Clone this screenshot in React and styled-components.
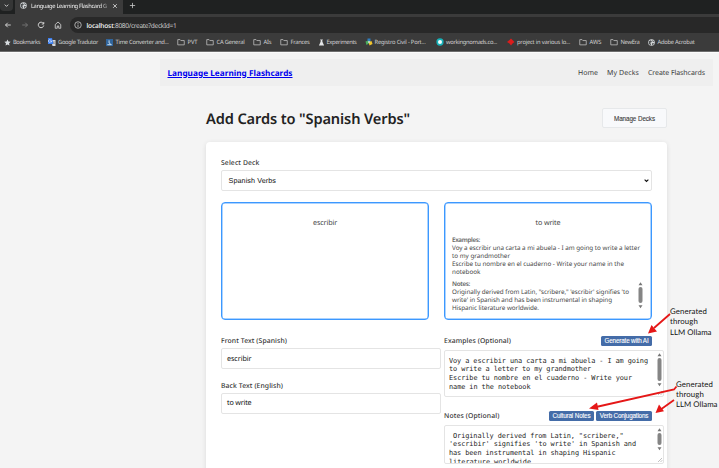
import React, { useLayoutEffect, useRef, useState } from "react";
import styled, { createGlobalStyle } from "styled-components";

const Global = createGlobalStyle`
  * { box-sizing: border-box; }
  html, body { margin: 0; padding: 0; overflow: hidden; }
  body {
    width: 719px; height: 468px; background: #f4f4f4; color: #333;
    font-family: "Noto Sans", "Open Sans", sans-serif; font-size: 7px;
    text-rendering: geometricPrecision;
  }
`;

/* Text tracked so that it spans a given width. */
const Line = styled.span`
  display: inline-block;
  white-space: pre;
`;

function Fitted({ w, children }) {
  const ref = useRef(null);
  const [tracking, setTracking] = useState(0);
  useLayoutEffect(() => {
    const natural = ref.current.getBoundingClientRect().width;
    setTracking((w - natural) / children.length);
  }, []);
  return (
    <Line ref={ref} style={{ letterSpacing: `${tracking}px` }}>
      {children}
    </Line>
  );
}

/* ---------- Browser chrome ---------- */
const Screen = styled.div`
  position: relative;
  width: 719px;
  height: 468px;
  overflow: hidden;
`;
const Browser = styled.header`
  height: 52px;
  background: #3b3b3b;
  border-bottom: 1px solid #6e6e6e;
  color: #d6d6d6;
`;
const TabStrip = styled.div`
  height: 14px;
  background: #1f2121;
  display: flex;
  align-items: stretch;
`;
const TabSearch = styled.div`
  width: 13px;
  height: 11px;
  background: #353636;
  border-radius: 0 0 4px 4px;
  display: flex;
  align-items: center;
  justify-content: center;
`;
const Tab = styled.div`
  margin-left: 2px;
  width: 108px;
  background: #3b3b3b;
  display: flex;
  align-items: center;
  padding: 0 5px 3px;
  line-height: 10px;
  font-size: 5.8px;
  color: #f0f0f0;
`;
const TabTitle = styled.div`
  margin-left: 4px;
  width: 78px;
  overflow: hidden;
  mask-image: linear-gradient(90deg, #000 90%, rgba(0, 0, 0, 0.3) 100%);
`;
const NewTab = styled.div`
  padding: 2px 0 0 6px;
  line-height: 0;
`;
const Toolbar = styled.div`
  height: 21px;
  display: flex;
  align-items: center;
  padding-left: 4px;
  gap: 8.5px;
  padding-top: 1px;
`;
const Omnibox = styled.div`
  flex: 1;
  height: 16px;
  margin-left: -0.500px;
  background: #282828;
  border-radius: 8px 0 0 8px;
  display: flex;
  align-items: center;
  padding-left: 4px;
  gap: 5px;
  font-size: 6.6px;
  color: #c8c8c8;
  b { color: #fff; font-weight: 500; }
`;
const Bookmarks = styled.div`
  height: 14px;
  display: flex;
  align-items: center;
  padding-left: 3.5px;
  font-size: 5.8px;
  line-height: 8px;
  color: #d2d2d2;
`;
const Bookmark = styled.div`
  width: ${(p) => p.$w}px;
  flex: none;
  display: flex;
  align-items: center;
  svg { flex: none; margin-right: ${(p) => p.$gap}px; }
`;

const S = ({ s = 8, children, ...rest }) => (
  <svg width={s} height={s} viewBox="0 0 16 16" fill="none" {...rest}>{children}</svg>
);
const Globe = ({ s = 7 }) => (
  <S s={s}>
    <circle cx="8" cy="8" r="7.5" fill="#d5d8da" />
    <path d="M2 5l4-2 3 2-2 3-3 1 3 2-1 4-4-4zM10 2l4 3-1 2-3-2zM10 9l4 1-3 4-2-2z" fill="#4d5052" />
  </S>
);
const Folder = () => (
  <S s={8}><path d="M1.5 3.2h4.6l1.6 1.9h6.8v8.6h-13z" stroke="#c4c4c4" strokeWidth="1.5" strokeLinejoin="round" /></S>
);
const icons = {
  star: <S s={7}><path d="M8 1l2.2 4.7 5.1.6-3.8 3.5 1 5.1L8 12.4l-4.5 2.5 1-5.1L.7 6.3l5.1-.6z" fill="#d8dde0" /></S>,
  translate: (
    <S s={8}>
      <path d="M6 4h9v12H9z" fill="#d4d7dc" /><path d="M0 0h8l3 12H0z" fill="#3b7ded" />
      <path d="M7 4H4.800a2.500 2.500 0 1 0 0 4H7V6H5" stroke="#fff" strokeWidth="1.200" />
      <path d="M10 8h4M12 7v1c0 2-1 3-2 4m1-3l3 3" stroke="#777" />
    </S>
  ),
  clock: <S s={7}><path d="M0 0h16v16H0z" fill="#31659c" /><path d="M7 3v6l4 3M3 13h10" stroke="#dfeefa" strokeWidth="2" /></S>,
  flask: <S s={7}><path d="M5 1h6v1.500h-1V6l4 9H2l4-9V2.500H5z" fill="#e2e4e6" /></S>,
  registro: (
    <S s={8}>
      <path d="M5 1h6v7H5z" fill="#2f7fc1" /><path d="M1 7l6-2 2 5-6 4z" fill="#4caf60" />
      <path d="M7 8l6-2 2 6-6 3z" fill="#f2c42c" /><circle cx="8" cy="8" r="2" fill="#cbd8d9" />
    </S>
  ),
  nomads: <S s={8}><circle cx="8" cy="8" r="7.300" fill="#16b1b8" /><circle cx="8" cy="8" r="4" fill="#f3ffff" /></S>,
  diamond: <S s={8}><path d="M8 1l3 3 4 4-4 3-3 4-3-4-5-3 5-4z" fill="#dc1c1c" /></S>,
  folder: <Folder />,
  globe: <Globe />,
};
const bookmarks = [
  ["star", "Bookmarks", 27, 44, 2.5],
  ["translate", "Google Tradutor", 40, 58, 2.5],
  ["clock", "Time Converter and...", 53, 71, 3],
  ["folder", "PVT", 10, 29, 3],
  ["folder", "CA General", 28, 47, 3],
  ["folder", "AIs", 8, 27, 3],
  ["folder", "Frances", 19, 38, 3],
  ["flask", "Experiments", 30, 47, 2],
  ["registro", "Registro Civil - Port...", 51, 71, 2],
  ["nomads", "workingnomads.co...", 51, 71, 2.5],
  ["diamond", "project in various lo...", 53, 72, 2.5],
  ["folder", "AWS", 12, 31, 3],
  ["folder", "NewEra", 19, 38, 3],
  ["globe", "Adobe Acrobat", 37, 60, 3],
];

/* ---------- Page ---------- */
const Page = styled.main`
  height: 416px;
  background: #f4f4f4;
  border-top: 1px solid #fcfcfc;
  padding: 6px 6.5px 0 160px;
`;
const Navbar = styled.nav`
  height: 27px;
  background: #efefef;
  display: flex;
  align-items: center;
  justify-content: space-between;
  padding: 2px 7.500px 0 7.500px;
`;
const Brand = styled.a`
  color: #0000ee;
  font-weight: 700;
  font-size: 8.2px;
  line-height: 12px;
  ${Line} {
    text-decoration: underline;
    text-decoration-thickness: 1px;
    text-underline-offset: 1px;
    text-decoration-skip-ink: auto;
  }
`;
const NavLinks = styled.div`
  display: flex;
  gap: 9px;
  font-size: 7px;
  line-height: 10px;
  color: #3c3c3c;
  padding-top: 1px;
`;
const Content = styled.section`
  width: 461px;
  margin-left: 46px;
`;
const HeadingRow = styled.div`
  height: 20px;
  margin-top: 22px;
  display: flex;
  align-items: center;
  justify-content: space-between;
`;
const Heading = styled.h1`
  margin: 0;
  padding-top: 2px;
  font-size: 14.6px;
  line-height: 20px;
  font-weight: 600;
  color: #222;
`;
const ManageButton = styled.button`
  width: 65px;
  height: 20px;
  padding: 0;
  border: 1px solid #e6e8ea;
  border-radius: 2px;
  background: #f8f9fb;
  color: #3c3c3c;
  font: 400 6.3px "Liberation Sans", sans-serif;
  -webkit-text-stroke: 0.1px #3c3c3c;
`;
const Panel = styled.div`
  margin-top: 14px;
  height: 350px;
  background: #fff;
  border-radius: 4px;
  box-shadow: 0 1px 5px rgba(0, 0, 0, 0.1);
  padding: 15px;
`;
const Label = styled.label`
  display: block;
  height: 10px;
  font-size: 6.8px;
  line-height: 11px;
  font-weight: 500;
  color: #333;
`;
const Field = styled.div`
  width: ${(p) => p.$w || 220}px;
  height: 21px;
  margin-top: 3px;
  border: 1px solid #e4e4e4;
  border-radius: 2px;
  background: #fff;
  display: flex;
  align-items: center;
  justify-content: space-between;
  padding: 0 2px 0 ${(p) => p.$pl || 5}px;
  font-family: ${(p) => (p.$sans ? '"Liberation Sans", Arial' : '"Noto Sans"')}, sans-serif;
  font-size: 7.2px;
  line-height: 10px;
  color: #111;
`;
const Previews = styled.div`
  display: grid;
  grid-template-columns: 208px 208px;
  gap: 15px;
  margin-top: 11px;
`;
const Preview = styled.div`
  height: 118px;
  border: 1px solid #3c98ff;
  box-shadow: inset 0 0 0 0.500px #5aa8ff;
  border-radius: 4px;
  padding: 15px 7px 0;
  background: #fff;
  color: #484848;
`;
const Word = styled.div`
  text-align: center;
  font-size: 7.2px;
  line-height: 11.5px;
`;
const Block = styled.div`
  margin-top: ${(p) => p.$mt}px;
  display: flex;
  justify-content: space-between;
  font-size: 6.3px;
`;
const Lines = styled.div`
  display: flex;
  flex-direction: column;
  align-items: flex-start;
  line-height: ${(p) => p.$lh || 8}px;
`;
const Strong = styled.span`
  font-weight: 600;
  color: #666;
`;
const Form = styled.div`
  display: grid;
  grid-template-columns: 223px 220px;
  margin-top: 15px;
`;
const LabelRow = styled.div`
  display: flex;
  height: 10px;
  width: 208px;
  align-items: center;
  gap: 2px;
  ${Label} { flex: 1; }
`;
const ActionButton = styled.button`
  width: ${(p) => p.$w}px;
  height: 10.500px;
  margin-top: 2px;
  padding: 0;
  border: 0;
  border-radius: 1.500px;
  background: #446ca8;
  color: #fff;
  font: 400 6.3px/10px "Liberation Sans", Arial, sans-serif;
  -webkit-text-stroke: 0.1px #fff;
`;
const TextArea = styled.div`
  height: ${(p) => p.$h}px;
  margin-top: 5px;
  border: 1px solid #e4e4e4;
  border-radius: 2px;
  overflow: hidden;
  display: flex;
  justify-content: space-between;
  padding: 0 0 0 4px;
  font-family: "DejaVu Sans Mono", monospace;
  font-size: 6.9px;
  color: #1d1d1d;
  ${Lines} { padding-top: 5.500px; flex: none; }
`;
const Spacer = styled.div`
  height: ${(p) => p.$h}px;
`;

function ScrollBar({ thumb, height, grip }) {
  return (
    <svg width="7" height={height} viewBox={`0 0 7 ${height}`}>
      <path d="M1.500 5.200L3.500 2.200l2 3z" fill="#777" />
      <rect x="1.500" y="7" width="4" height={thumb} rx="2" fill="#858585" />
      <path d={`M1.500 ${thumb + 9.300}h4l-2 3z`} fill="#777" />
      {grip && <path d={`M2 ${height - 1}l4-4M4.500 ${height - 1}l1.800-1.800`} stroke="#999" strokeWidth=".6" />}
    </svg>
  );
}

/* ---------- Annotations over the page ---------- */
const Overlay = styled.svg`
  position: absolute;
  inset: 0;
`;
const Note = styled.div`
  position: absolute;
  left: ${(p) => p.$x}px;
  top: ${(p) => p.$y}px;
  display: flex;
  flex-direction: column;
  align-items: flex-start;
  font-family: Lato, "Open Sans", sans-serif;
  font-size: 7.8px;
  line-height: 10.4px;
  color: #111;
`;
const Annotation = ({ x, y }) => (
  <Note $x={x} $y={y}>
    <Fitted w={37}>Generated</Fitted>
    <Fitted w={28}>through</Fitted>
    <Fitted w={41.5}>LLM Ollama</Fitted>
  </Note>
);

export default function App() {
  return (
    <>
      <Global />
      <Screen>
        <Browser>
          <TabStrip>
            <TabSearch>
              <S s={7}><path d="M4 6l4 4 4-4" stroke="#ddd" strokeWidth="2" /></S>
            </TabSearch>
            <Tab>
              <Globe />
              <TabTitle><Fitted w={76}>Language Learning Flashcard G</Fitted></TabTitle>
              <S s={6} style={{ marginLeft: 4 }}><path d="M3 3l10 10M13 3L3 13" stroke="#eee" strokeWidth="2" /></S>
            </Tab>
            <NewTab><S s={7}><path d="M8 2v12M2 8h12" stroke="#ccc" strokeWidth="1.800" /></S></NewTab>
          </TabStrip>
          <Toolbar>
            <S><path d="M13.500 8H3M7.500 3.500L3 8l4.500 4.500" stroke="#ddd" strokeWidth="1.800" /></S>
            <S><path d="M2.500 8H13M8.500 3.500L13 8l-4.500 4.500" stroke="#777" strokeWidth="1.800" /></S>
            <S><path d="M12.800 5A5.500 5.500 0 1 0 13.500 9M13.500 2v4h-4" stroke="#ddd" strokeWidth="1.900" /></S>
            <S><path d="M2.500 7L8 2l5.500 5v7.500h-4V10h-3v4.500h-4z" stroke="#d5d5d5" strokeWidth="1.700" /></S>
            <Omnibox>
              <S><circle cx="8" cy="8" r="6.500" stroke="#ccc" strokeWidth="1.600" /><path d="M8 7v5M8 4v1.800" stroke="#ccc" strokeWidth="1.600" /></S>
              <div><b><Fitted w={27}>localhost</Fitted></b><Fitted w={63}>:8080/create?deckId=1</Fitted></div>
            </Omnibox>
          </Toolbar>
          <Bookmarks>
            {bookmarks.map(([icon, name, textWidth, width, gap]) => (
              <Bookmark key={name} $w={width} $gap={gap}>
                {icons[icon]}
                <Fitted w={textWidth}>{name}</Fitted>
              </Bookmark>
            ))}
          </Bookmarks>
        </Browser>
        <Page>
          <Navbar>
            <Brand><Fitted w={125}>Language Learning Flashcards</Fitted></Brand>
            <NavLinks>
              <Fitted w={20}>Home</Fitted>
              <Fitted w={32}>My Decks</Fitted>
              <Fitted w={57}>Create Flashcards</Fitted>
            </NavLinks>
          </Navbar>
          <Content>
            <HeadingRow>
              <Heading><Fitted w={204}>Add Cards to "Spanish Verbs"</Fitted></Heading>
              <ManageButton><Fitted w={41}>Manage Decks</Fitted></ManageButton>
            </HeadingRow>
            <Panel>
              <Label><Fitted w={38.5}>Select Deck</Fitted></Label>
              <Field $w={431} $sans $pl={6.5}>
                <Fitted w={47.5}>Spanish Verbs</Fitted>
                <S s={5}><path d="M2 5l6 6 6-6" stroke="#111" strokeWidth="3.500" /></S>
              </Field>
              <Previews>
                <Preview><Word><Fitted w={24}>escribir</Fitted></Word></Preview>
                <Preview>
                  <Word><Fitted w={25}>to write</Fitted></Word>
                  <Block $mt={6}>
                    <Lines>
                      <Strong><Fitted w={28}>Examples:</Fitted></Strong>
                      <Fitted w={188}>Voy a escribir una carta a mi abuela - I am going to write a letter</Fitted>
                      <Fitted w={58}>to my grandmother</Fitted>
                      <Fitted w={172}>Escribe tu nombre en el cuaderno - Write your name in the</Fitted>
                      <Fitted w={28.5}>notebook</Fitted>
                    </Lines>
                  </Block>
                  <Block $mt={4}>
                    <Lines $lh={8.2}>
                      <Strong><Fitted w={18}>Notes:</Fitted></Strong>
                      <Fitted w={177}>Originally derived from Latin, "scribere," 'escribir' signifies 'to</Fitted>
                      <Fitted w={160}>write' in Spanish and has been instrumental in shaping</Fitted>
                      <Fitted w={87}>Hispanic literature worldwide.</Fitted>
                    </Lines>
                    <ScrollBar height={33} thumb={16} />
                  </Block>
                </Preview>
              </Previews>
              <Form>
                <div>
                  <Label><Fitted w={66}>Front Text (Spanish)</Fitted></Label>
                  <Field><Fitted w={24.5}>escribir</Fitted></Field>
                  <Spacer $h={10.5} />
                  <Label><Fitted w={62}>Back Text (English)</Fitted></Label>
                  <Field><Fitted w={24.5}>to write</Fitted></Field>
                </div>
                <div>
                  <LabelRow>
                    <Label><Fitted w={67}>Examples (Optional)</Fitted></Label>
                    <ActionButton $w={51}><Fitted w={44}>Generate with AI</Fitted></ActionButton>
                  </LabelRow>
                  <TextArea $h={47}>
                    <Lines $lh={8.8}>
                      <Fitted w={199}>Voy a escribir una carta a mi abuela - I am going</Fitted>
                      <Fitted w={142}>to write a letter to my grandmother</Fitted>
                      <Fitted w={183}>Escribe tu nombre en el cuaderno - Write your</Fitted>
                      <Fitted w={81.5}>name in the notebook</Fitted>
                    </Lines>
                    <ScrollBar height={45} thumb={23} grip />
                  </TextArea>
                  <Spacer $h={13} />
                  <LabelRow>
                    <Label><Fitted w={55.5}>Notes (Optional)</Fitted></Label>
                    <ActionButton $w={45}><Fitted w={38}>Cultural Notes</Fitted></ActionButton>
                    <ActionButton $w={56}><Fitted w={48.5}>Verb Conjugations</Fitted></ActionButton>
                  </LabelRow>
                  <TextArea $h={38.5}>
                    <Lines $lh={8.8}>
                      <Fitted w={174.500}>{' Originally derived from Latin, "scribere,"'}</Fitted>
                      <Fitted w={187}>'escribir' signifies 'to write' in Spanish and</Fitted>
                      <Fitted w={166.500}>has been instrumental in shaping Hispanic</Fitted>
                      <Fitted w={82}>literature worldwide</Fitted>
                    </Lines>
                    <ScrollBar height={37} thumb={12} grip />
                  </TextArea>
                </div>
              </Form>
            </Panel>
          </Content>
        </Page>
        <Overlay width="719" height="468" viewBox="0 0 719 468">
          <path
            d="M670 314L654 328M676.500 386.500l-2.500 3L596 407M674 400L660 410"
            fill="none" stroke="#e51717" strokeWidth="1.800"
          />
          <path
            d="M648 333.500l3.500-8.500 5.500 6.500zM589 408.500l8-6 1.500 7.500zM655.500 413l3.500-8.500 5 6.800z"
            fill="#e51717"
          />
        </Overlay>
        <Annotation x={670} y={306} />
        <Annotation x={676} y={378.5} />
      </Screen>
    </>
  );
}
